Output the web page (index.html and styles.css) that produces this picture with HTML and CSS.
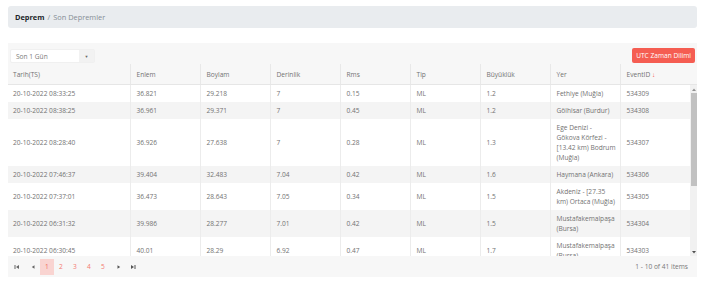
FILE: index.html
```html
<!DOCTYPE html>
<html lang="tr">
<head>
<meta charset="utf-8">
<link rel="stylesheet" href="styles.css">
<title>Son Depremler</title>
</head>
<body>
<div class="page">
  <nav class="breadcrumb">
    <span class="crumb-main">Deprem</span>
    <span class="crumb-sep">/</span>
    <span class="crumb-sub">Son Depremler</span>
  </nav>

  <section class="card">
    <div class="toolbar">
      <div class="dropdown">
        <span class="dropdown-value">Son 1 Gün</span>
        <span class="dropdown-arrow">▼</span>
      </div>
      <button class="btn-utc">UTC Zaman Dilimi</button>
    </div>

    <div class="grid-header">
      <table class="grid-table">
        <colgroup>
          <col class="c-date"><col class="c-n"><col class="c-n"><col class="c-n"><col class="c-n"><col class="c-n"><col class="c-n"><col class="c-n"><col class="c-n">
        </colgroup>
        <thead>
          <tr>
            <th>Tarih(TS)</th><th>Enlem</th><th>Boylam</th><th>Derinlik</th><th>Rms</th><th>Tip</th><th>Büyüklük</th><th>Yer</th><th>EventID <span class="sort">↓</span></th>
          </tr>
        </thead>
      </table>
      <div class="header-gap"></div>
    </div>

    <div class="grid-body">
      <div class="grid-content">
        <table class="grid-table">
          <colgroup>
            <col class="c-date"><col class="c-n"><col class="c-n"><col class="c-n"><col class="c-n"><col class="c-n"><col class="c-n"><col class="c-n"><col class="c-n">
          </colgroup>
          <tbody>
            <tr><td>20-10-2022 08:33:25</td><td>36.821</td><td>29.218</td><td>7</td><td>0.15</td><td>ML</td><td>1.2</td><td>Fethiye (Muğla)</td><td>534309</td></tr>
            <tr class="alt"><td>20-10-2022 08:38:25</td><td>36.961</td><td>29.371</td><td>7</td><td>0.45</td><td>ML</td><td>1.2</td><td>Gölhisar (Burdur)</td><td>534308</td></tr>
            <tr><td>20-10-2022 08:28:40</td><td>36.926</td><td>27.638</td><td>7</td><td>0.28</td><td>ML</td><td>1.3</td><td>Ege Denizi - Gökova Körfezi - [13.42 km) Bodrum (Muğla)</td><td>534307</td></tr>
            <tr class="alt"><td>20-10-2022 07:46:37</td><td>39.404</td><td>32.483</td><td>7.04</td><td>0.42</td><td>ML</td><td>1.6</td><td>Haymana (Ankara)</td><td>534306</td></tr>
            <tr><td>20-10-2022 07:37:01</td><td>36.473</td><td>28.643</td><td>7.05</td><td>0.34</td><td>ML</td><td>1.5</td><td>Akdeniz - [27.35 km) Ortaca (Muğla)</td><td>534305</td></tr>
            <tr class="alt"><td>20-10-2022 06:31:32</td><td>39.986</td><td>28.277</td><td>7.01</td><td>0.42</td><td>ML</td><td>1.5</td><td>Mustafakemalpaşa (Bursa)</td><td>534304</td></tr>
            <tr><td>20-10-2022 06:30:45</td><td>40.01</td><td>28.29</td><td>6.92</td><td>0.47</td><td>ML</td><td>1.7</td><td>Mustafakemalpaşa (Bursa)</td><td>534303</td></tr>
          </tbody>
        </table>
      </div>
      <div class="scrollbar">
        <span class="sb-arrow">
          <svg width="4" height="3" viewBox="0 0 4 3"><path d="M0 3 L2 0.5 L4 3 Z" fill="#909090"/></svg>
        </span>
        <div class="sb-track">
          <div class="sb-thumb"></div>
        </div>
        <span class="sb-arrow">
          <svg width="4" height="3" viewBox="0 0 4 3"><path d="M0 0 L2 2.5 L4 0 Z" fill="#505050"/></svg>
        </span>
      </div>
    </div>

    <div class="pager">
      <div class="pager-nav">
        <span class="pg-icon first">
          <svg width="6" height="6" viewBox="0 0 6 6"><rect x="0.5" y="1" width="1" height="4" fill="#666"/><path d="M5 1 L2 3 L5 5 Z" fill="#666"/></svg>
        </span>
        <span class="pg-icon">
          <svg width="6" height="6" viewBox="0 0 6 6"><path d="M4.5 1.2 L1.8 3 L4.5 4.8 Z" fill="#666"/></svg>
        </span>
        <span class="pg-num active">1</span>
        <span class="pg-num">2</span>
        <span class="pg-num">3</span>
        <span class="pg-num">4</span>
        <span class="pg-num">5</span>
        <span class="pg-icon next">
          <svg width="6" height="6" viewBox="0 0 6 6"><path d="M1.5 1.2 L4.2 3 L1.5 4.8 Z" fill="#555"/></svg>
        </span>
        <span class="pg-icon">
          <svg width="6" height="6" viewBox="0 0 6 6"><path d="M1 1 L4 3 L1 5 Z" fill="#555"/><rect x="4.5" y="1" width="1" height="4" fill="#555"/></svg>
        </span>
      </div>
      <div class="pager-info">1 - 10 of 41 items</div>
    </div>
  </section>
</div>
</body>
</html>
```

FILE: styles.css
```css
* { box-sizing: border-box; }

html, body {
  margin: 0;
  padding: 0;
  background: #ffffff;
}

body {
  font-family: "Open Sans", "Noto Sans", sans-serif;
  font-size: 6.6px;
  color: #727272;
}

.page {
  padding: 6px 6px 0 8px;
}

.breadcrumb {
  display: flex;
  align-items: center;
  gap: 3px;
  height: 22px;
  padding: 0 7px;
  background: #e9ecef;
  border-radius: 3px;
  font-size: 7.4px;
}

.crumb-main {
  font-weight: 700;
  color: #212529;
}

.crumb-sep,
.crumb-sub {
  color: #868e96;
}

.card {
  margin-top: 15px;
  background: #f7f7f7;
}

.toolbar {
  display: flex;
  align-items: flex-end;
  justify-content: space-between;
  height: 21px;
  padding: 0 2px 1px;
}

.dropdown {
  display: flex;
  width: 85px;
  height: 14px;
  background: #ffffff;
  border: 1px solid #f0f0f0;
  border-radius: 2px;
}

.dropdown-value {
  flex: 1;
  display: flex;
  align-items: center;
  padding-left: 5px;
  color: #7a7a7a;
}

.dropdown-arrow {
  width: 15px;
  display: flex;
  align-items: center;
  justify-content: center;
  background: #f2f2f2;
  color: #666;
  font-size: 4px;
}

.btn-utc {
  height: 15px;
  padding: 0 4px;
  border: none;
  border-radius: 2px;
  background: #f55d52;
  color: #ffffff;
  font-family: inherit;
  font-size: 6.6px;
}

.grid-table {
  width: 682px;
  table-layout: fixed;
  border-collapse: collapse;
}

.c-date { width: 122px; }
.c-n { width: 70px; }

.grid-header {
  display: flex;
  background: #f7f7f7;
  border-bottom: 1px solid #e6e6e6;
}

.header-gap {
  flex: 1;
}

.grid-table th {
  height: 20px;
  padding: 0 3px 0 6px;
  text-align: left;
  font-weight: 400;
  color: #727272;
  border-left: 1px solid #e8e8e8;
  white-space: nowrap;
}

.grid-table th:first-child,
.grid-table td:first-child {
  border-left: none;
  padding-left: 5px;
}

.sort {
  color: #f55d52;
}

.grid-body {
  display: flex;
  height: 171px;
  overflow: hidden;
  background: #ffffff;
}

.grid-content {
  width: 682px;
  overflow: hidden;
}

.grid-table td {
  padding: 3.5px 3px 3.5px 6px;
  line-height: 10px;
  vertical-align: middle;
  border-left: 1px solid #ececec;
  color: #727272;
}

.grid-table tr.alt td {
  background: #f4f4f4;
}

.scrollbar {
  width: 7px;
  display: flex;
  flex-direction: column;
  background: #f1f1f1;
}

.sb-arrow {
  height: 8px;
  display: flex;
  align-items: center;
  justify-content: center;
}

.sb-track {
  flex: 1;
  padding: 0 0.5px;
}

.sb-thumb {
  height: 93px;
  background: #c1c1c1;
}

.pager {
  display: flex;
  align-items: center;
  justify-content: space-between;
  height: 21px;
  padding: 0 9px 0 2px;
  background: #f7f7f7;
}

.pager-nav {
  display: flex;
  align-items: center;
}

.pg-icon {
  width: 14px;
  height: 14px;
  display: flex;
  align-items: center;
  justify-content: center;
}

.pg-icon.first {
  margin-right: 2px;
}

.pg-icon.next {
  margin-left: 2px;
}

.pg-num {
  width: 14px;
  height: 16px;
  display: flex;
  align-items: center;
  justify-content: center;
  color: #f47a70;
}

.pg-num.active {
  background: #f9d4d1;
  color: #f06a60;
}

.pager-info {
  color: #777777;
}
```
